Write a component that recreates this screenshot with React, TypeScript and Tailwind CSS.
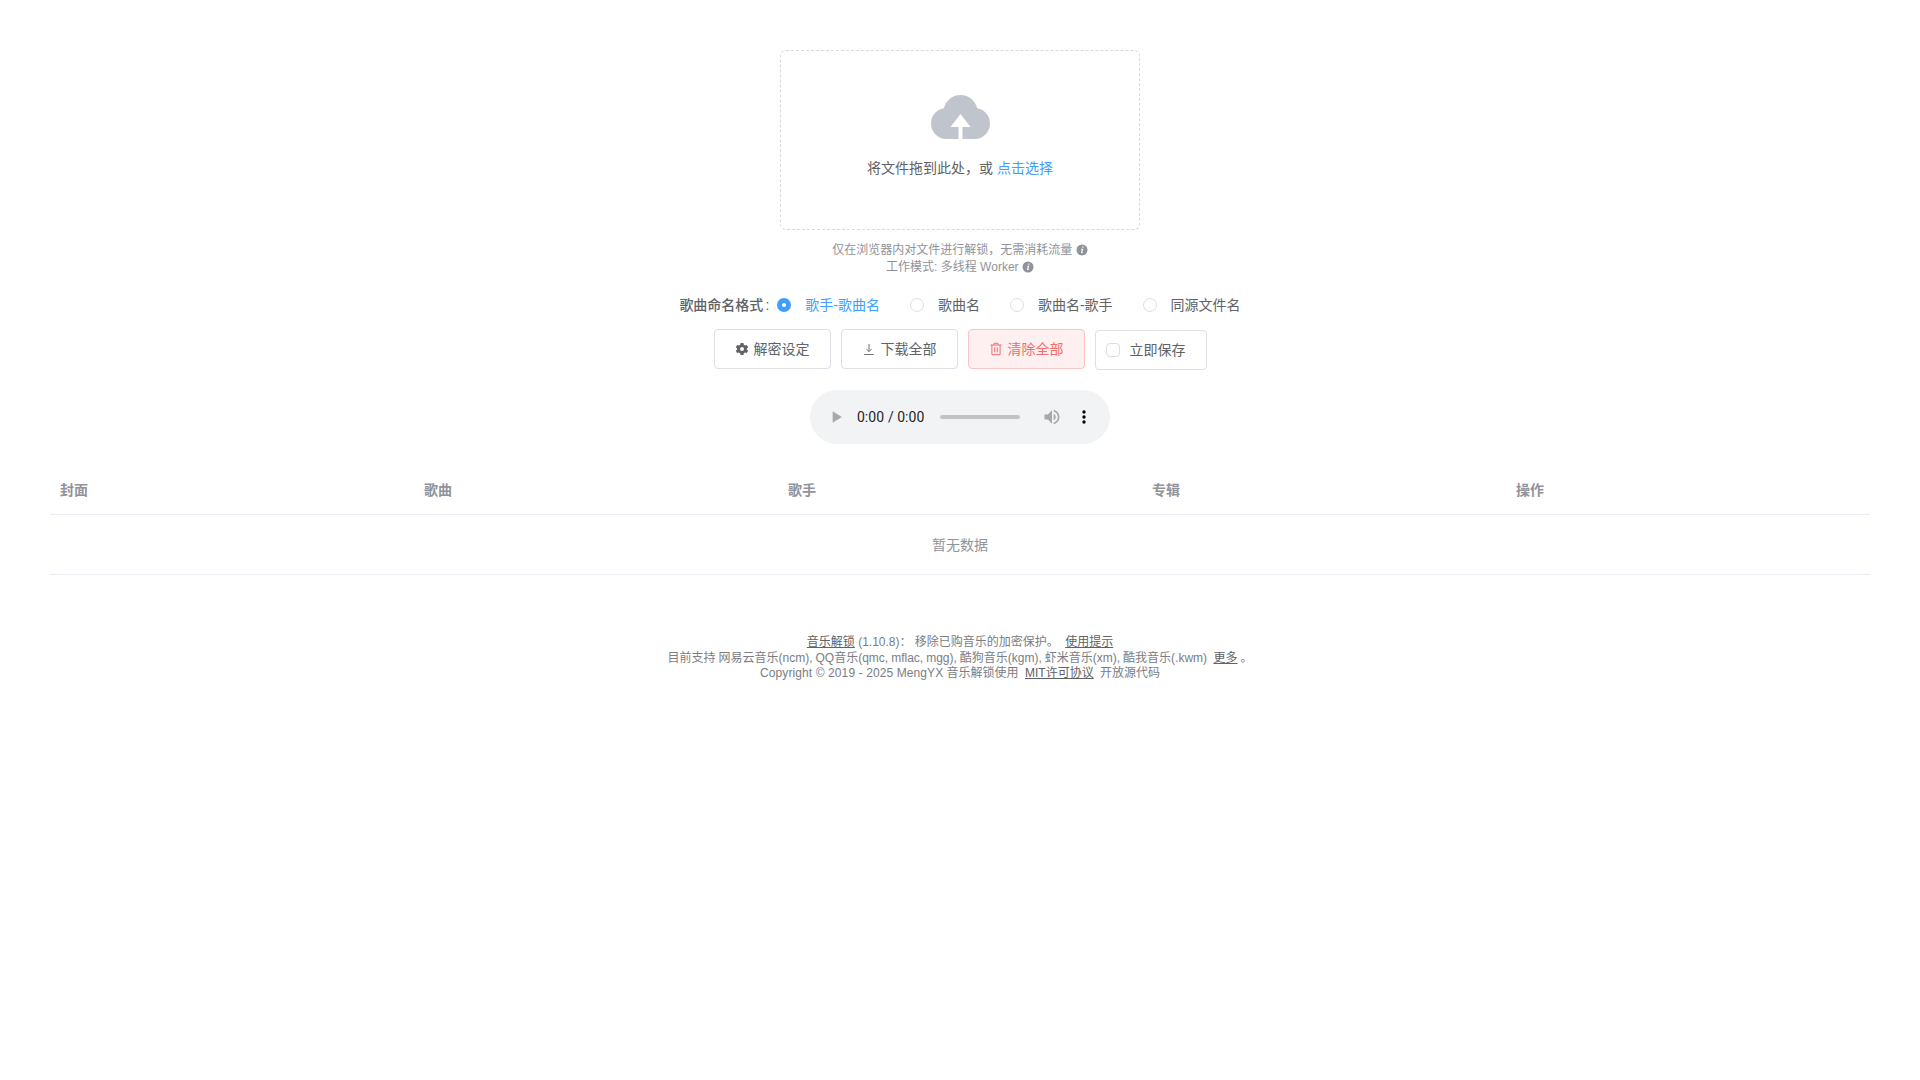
import React from "react";

function InfoIcon() {
  return (
    <svg width="12" height="12" viewBox="0 0 12 12" className="inline-block align-[-2px]">
      <circle cx="6" cy="6" r="5.5" fill="#909399" />
      <path d="M6.4 2.6h1.2l-.3 1.2H6.1zM5.9 4.8h1.3l-.9 3.6h.8l-.2.7H4.9l.9-3.6h-.7l.2-.7z" fill="#fff" />
    </svg>
  );
}

function GearIcon() {
  return (
    <svg width="14" height="14" viewBox="0 0 14 14" className="shrink-0">
      <path
        fillRule="evenodd"
        fill="#606266"
        d="M5.6 1h2.8l.4 1.7 1.3.7 1.7-.5 1.4 2.4-1.3 1.2v1l1.3 1.2-1.4 2.4-1.7-.5-1.3.7L8.4 13H5.6l-.4-1.7-1.3-.7-1.7.5L.8 8.7l1.3-1.2v-1L.8 5.3l1.4-2.4 1.7.5 1.3-.7zM7 5a2 2 0 1 0 0 4 2 2 0 0 0 0-4z"
      />
    </svg>
  );
}

function DownloadIcon() {
  return (
    <svg width="14" height="14" viewBox="0 0 14 14" fill="none" stroke="#606266" strokeWidth="0.9" className="shrink-0">
      <path d="M7 2v7.5M4.4 7 7 9.6 9.6 7M2.2 12.5h9.6" />
    </svg>
  );
}

function TrashIcon() {
  return (
    <svg width="14" height="14" viewBox="0 0 14 14" fill="none" stroke="#f56c6c" strokeWidth="1" className="shrink-0">
      <path d="M1.5 3h11M5 3V1.3h4V3M2.9 3v9.7h8.2V3M5.7 5.5v4.8M8.3 5.5v4.8" />
    </svg>
  );
}

function UploadIcon() {
  return (
    <svg width="59" height="44" viewBox="0 0 59 44" className="block">
      <g fill="#c0c4cc">
        <circle cx="15.5" cy="28.5" r="15.5" />
        <circle cx="43.5" cy="28.5" r="15.5" />
        <circle cx="29.5" cy="17" r="17" />
        <rect x="15.5" y="20" width="28" height="24" />
      </g>
      <path d="M29.5 19 39.5 32H31.5V44H27.5V32H19.5Z" fill="#fff" />
    </svg>
  );
}

function Radio({ label, checked, last }: { label: string; checked?: boolean; last?: boolean }) {
  return (
    <label className={`flex items-center ${last ? "" : "mr-[30px]"}`}>
      {checked ? (
        <span className="flex h-[14px] w-[14px] items-center justify-center rounded-full bg-[#409eff]">
          <span className="h-1 w-1 rounded-full bg-white" />
        </span>
      ) : (
        <span className="h-[14px] w-[14px] rounded-full border border-[#dcdfe6] bg-white" />
      )}
      <span className={`pl-[14px] text-sm ${checked ? "text-[#409eff]" : "text-[#606266]"}`}>{label}</span>
    </label>
  );
}

function Btn({ icon, label, danger }: { icon: React.ReactNode; label: string; danger?: boolean }) {
  return (
    <button
      className={`flex h-10 items-center gap-[5px] rounded border px-5 text-sm ${
        danger ? "border-[#fbc4c4] bg-[#fef0f0] text-[#f56c6c]" : "border-[#dcdfe6] bg-white text-[#606266]"
      }`}
    >
      {icon}
      {label}
    </button>
  );
}

function Link({ children, className }: { children: React.ReactNode; className?: string }) {
  return <a className={`text-[#606266] underline ${className ?? ""}`}>{children}</a>;
}

export default function App() {
  const heads = ["封面", "歌曲", "歌手", "专辑", "操作"];
  return (
    <div className="min-h-[1080px] bg-white px-[50px] pt-[50px] font-['Liberation_Sans','Noto_Sans_CJK_SC',sans-serif] text-[#606266]">
      <div className="mx-auto flex h-[180px] w-[360px] flex-col items-center rounded-md border border-dashed border-[#d9d9d9] pt-11">
        <UploadIcon />
        <div className="mt-[19px] text-sm leading-[20px]">
          将文件拖到此处，或 <em className="not-italic text-[#409eff]">点击选择</em>
        </div>
      </div>

      <div className="mt-[12px] text-center text-xs leading-[17px] text-[#909399]">
        <div>
          仅在浏览器内对文件进行解锁，无需消耗流量 <InfoIcon />
        </div>
        <div>
          工作模式: 多线程 Worker <InfoIcon />
        </div>
      </div>

      <div className="mt-[19px] flex h-5 items-center justify-center">
        <span className="mr-2 text-sm font-medium text-[#606266]">
          歌曲命名格式<span className="ml-[2px]">:</span>
        </span>
        <Radio label="歌手-歌曲名" checked />
        <Radio label="歌曲名" />
        <Radio label="歌曲名-歌手" />
        <Radio label="同源文件名" last />
      </div>

      <div className="mt-[14px] flex items-start justify-center gap-[10px]">
        <Btn icon={<GearIcon />} label="解密设定" />
        <Btn icon={<DownloadIcon />} label="下载全部" />
        <Btn icon={<TrashIcon />} label="清除全部" danger />
        <label className="mt-px flex h-10 items-center rounded border border-[#dcdfe6] bg-white pl-[10px] pr-5">
          <span className="h-[14px] w-[14px] rounded-sm border border-[#dcdfe6] bg-white" />
          <span className="pl-[10px] text-sm">立即保存</span>
        </label>
      </div>

      <div className="mt-[20px] flex justify-center">
        <audio controls className="block" />
      </div>

      <div className="mt-[22px]">
        <div className="grid h-[49px] grid-cols-5 border-b border-[#ebeef5] text-sm font-bold text-[#909399]">
          {heads.map((h) => (
            <div key={h} className="flex items-center px-[10px]">
              {h}
            </div>
          ))}
        </div>
        <div className="flex h-[60px] items-center justify-center border-b border-[#ebeef5] text-sm text-[#909399]">
          暂无数据
        </div>
      </div>

      <div className="mt-[60px] text-center text-xs leading-[15.5px] text-[#7a7d83]">
        <div>
          <Link>音乐解锁</Link> (1.10.8)： 移除已购音乐的加密保护。 <Link className="ml-[3px]">使用提示</Link>
        </div>
        <div>
          <span className="[word-spacing:-0.35px]">
            目前支持 网易云音乐(ncm), QQ音乐(qmc, mflac, mgg), 酷狗音乐(kgm), 虾米音乐(xm), 酷我音乐(.kwm)
          </span>{" "}
          <Link className="ml-[3px]">更多</Link>
          <span className="ml-[3px]">。</span>
        </div>
        <div>
          <span className="tracking-[0.1px]">Copyright © 2019 - 2025 MengYX</span> 音乐解锁使用{" "}
          <Link className="mx-[3px]">MIT许可协议</Link> 开放源代码
        </div>
      </div>
    </div>
  );
}
